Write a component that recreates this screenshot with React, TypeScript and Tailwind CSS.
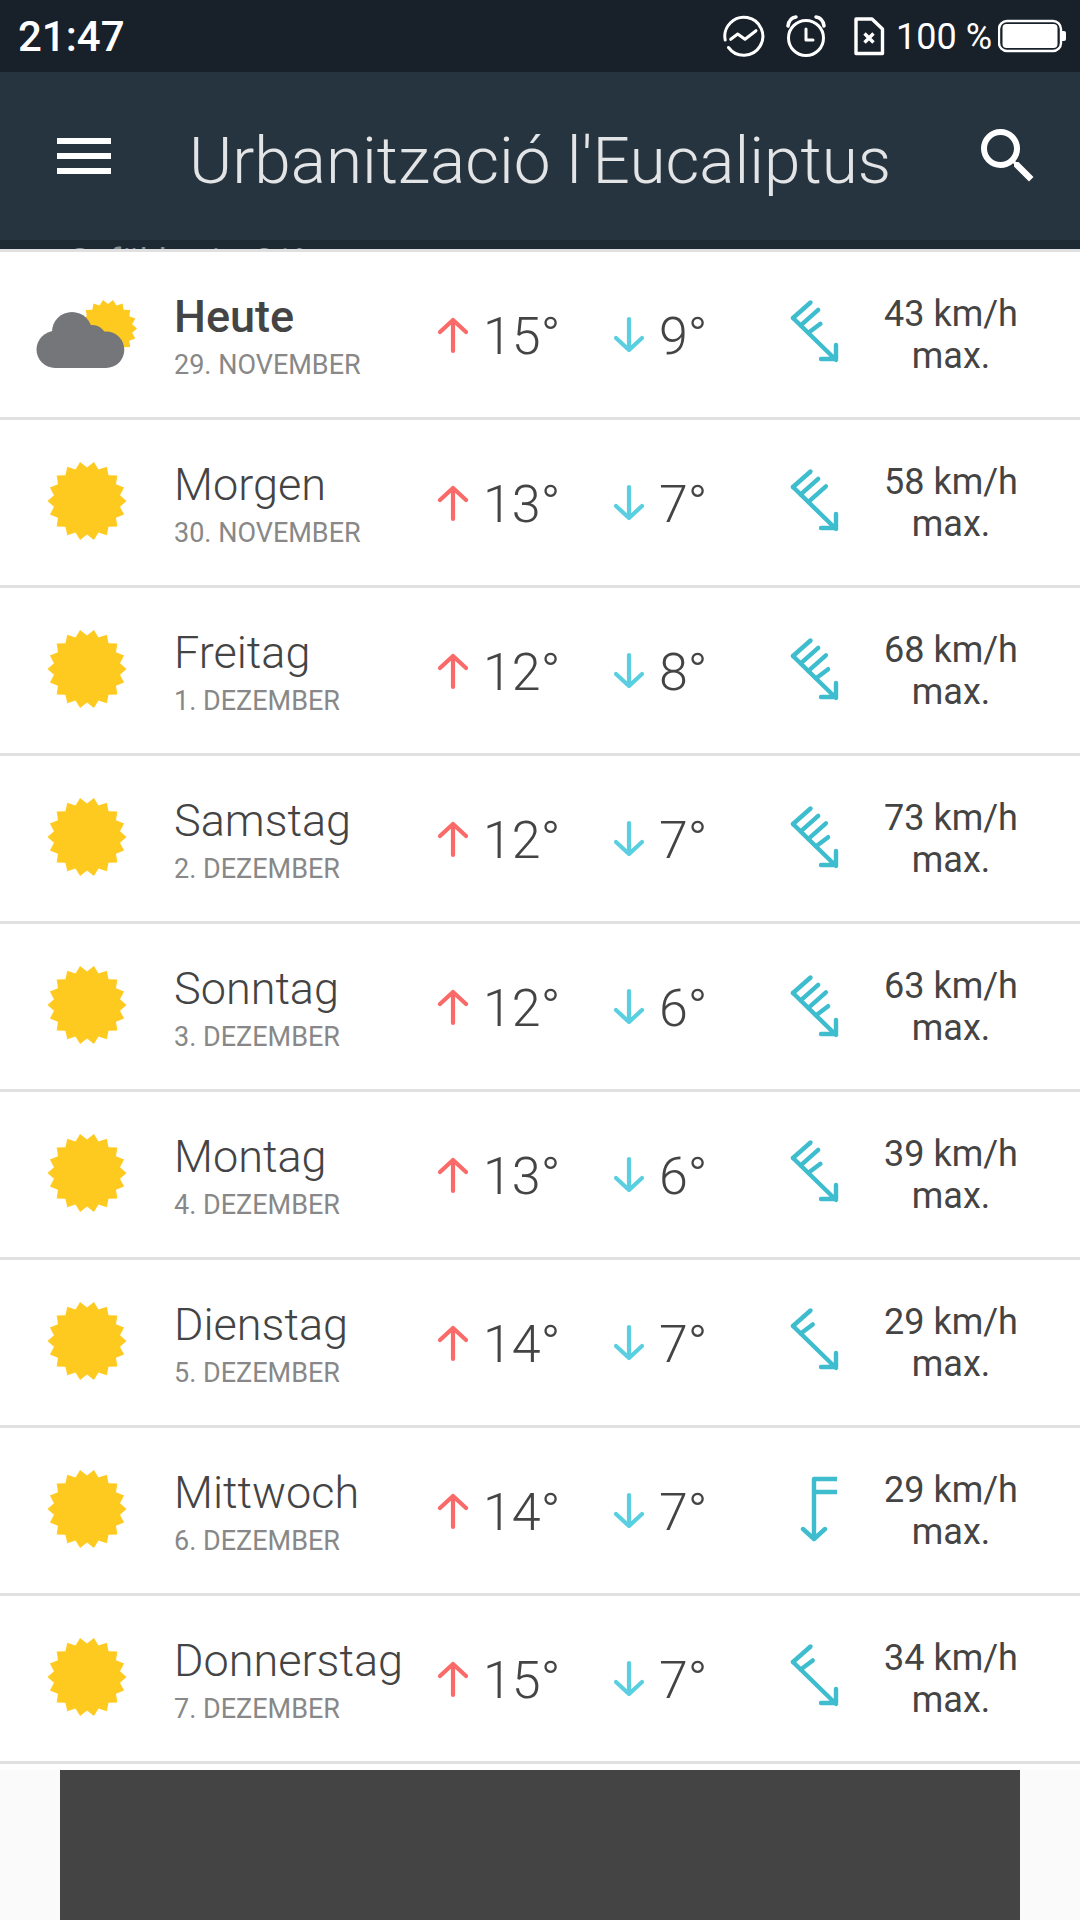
type Barb = "long" | "short";

type Day = {
  name: string;
  date: string;
  high: number;
  low: number;
  wind: number;
  barbs: Barb[];
  windY: number;
  today?: boolean;
  south?: boolean;
};

const days: Day[] = [
  { name: "Heute", date: "29. NOVEMBER", high: 15, low: 9, wind: 43, barbs: ["long", "long", "short"], windY: -17, today: true },
  { name: "Morgen", date: "30. NOVEMBER", high: 13, low: 7, wind: 58, barbs: ["long", "long", "long"], windY: -16 },
  { name: "Freitag", date: "1. DEZEMBER", high: 12, low: 8, wind: 68, barbs: ["long", "long", "long", "short"], windY: -15 },
  { name: "Samstag", date: "2. DEZEMBER", high: 12, low: 7, wind: 73, barbs: ["long", "long", "long", "short"], windY: -15 },
  { name: "Sonntag", date: "3. DEZEMBER", high: 12, low: 6, wind: 63, barbs: ["long", "long", "long", "short"], windY: -14 },
  { name: "Montag", date: "4. DEZEMBER", high: 13, low: 6, wind: 39, barbs: ["long", "long", "short"], windY: -17 },
  { name: "Dienstag", date: "5. DEZEMBER", high: 14, low: 7, wind: 29, barbs: ["long", "short"], windY: -17 },
  { name: "Mittwoch", date: "6. DEZEMBER", high: 14, low: 7, wind: 29, barbs: [], windY: 0, south: true },
  { name: "Donnerstag", date: "7. DEZEMBER", high: 15, low: 7, wind: 34, barbs: ["long", "short"], windY: -17 },
];

function sunPoints(cx: number, cy: number, outer: number, inner: number) {
  const pts: string[] = [];
  for (let i = 0; i < 36; i++) {
    const r = i % 2 === 0 ? outer : inner;
    const a = (i * 10 * Math.PI) / 180;
    pts.push(`${(cx + r * Math.cos(a)).toFixed(1)},${(cy + r * Math.sin(a)).toFixed(1)}`);
  }
  return pts.join(" ");
}

function SunIcon() {
  return (
    <svg width="100" height="100" viewBox="0 0 100 100" className="ml-[37px] -mt-[3px]">
      <polygon points={sunPoints(50, 50, 39.5, 33.5)} fill="#FFCA1F" />
    </svg>
  );
}

function CloudSunIcon() {
  return (
    <svg width="110" height="90" viewBox="0 0 110 90" className="ml-[30px]">
      <polygon points={sunPoints(78, 38.5, 29, 24.5)} fill="#FFCA1F" />
      <g fill="#757679">
        <circle cx="25" cy="59.5" r="18.5" />
        <circle cx="42" cy="42" r="20" />
        <circle cx="62" cy="50" r="15" />
        <circle cx="76" cy="59.7" r="18.3" />
        <rect x="25" y="50" width="51" height="28" />
      </g>
    </svg>
  );
}

function WindIcon({ barbs, y, south }: { barbs: Barb[]; y: number; south?: boolean }) {
  if (south) {
    return (
      <svg width="60" height="80" viewBox="0 0 60 80" fill="none" stroke="#3DBDCD" strokeWidth="4.4" strokeLinecap="round" strokeLinejoin="round">
        <path d="M29 8V68M18 58L29 68L40 58" />
        <path d="M29 8H52M29 21H52" strokeLinecap="butt" />
      </svg>
    );
  }
  return (
    <svg width="60" height="80" viewBox="0 0 60 80" fill="none" stroke="#3DBDCD" strokeWidth="4.4" strokeLinecap="round" strokeLinejoin="round">
      <g transform={`translate(8 ${40 + y})`}>
        <path d="M0 0L43 42M28 41H43V27" />
        {barbs.map((b, i) => {
          const x0 = i * 7.7;
          const y0 = i * 7.4;
          const dx = b === "long" ? 17.5 : 12;
          const dy = b === "long" ? -15.5 : -9;
          return <path key={i} d={`M${x0} ${y0}l${dx} ${dy}`} />;
        })}
      </g>
    </svg>
  );
}

function TempArrow({ up }: { up: boolean }) {
  return (
    <svg width="34" height="40" viewBox="0 0 34 40" fill="none" stroke={up ? "#F96A69" : "#5ACFDF"} strokeWidth="4.2" strokeLinecap="round" strokeLinejoin="round">
      {up ? <path d="M17 36V5M4 17L17 5L30 17" /> : <path d="M17 4V35M4 23L17 35L30 23" />}
    </svg>
  );
}

function DayRow({ day }: { day: Day }) {
  return (
    <div className="flex h-[168px] items-center border-b-[3px] border-[#e0e0e0] bg-white text-[#444444]">
      <div className="w-[174px] shrink-0">{day.today ? <CloudSunIcon /> : <SunIcon />}</div>
      <div className="flex w-[262px] shrink-0 flex-col pt-[4px]">
        <span className={`text-[45px] leading-[50px] ${day.today ? "font-medium" : "font-light"}`}>{day.name}</span>
        <span className="mt-[7px] text-[27px] leading-[32px] text-[#888888]">{day.date}</span>
      </div>
      <div className="flex w-[176px] shrink-0 items-center">
        <TempArrow up />
        <span className="ml-[13px] mt-[4px] text-[52px] font-light leading-none">{day.high}°</span>
      </div>
      <div className="flex w-[173px] shrink-0 items-center">
        <TempArrow up={false} />
        <span className="ml-[13px] mt-[4px] text-[52px] font-light leading-none">{day.low}°</span>
      </div>
      <div className="w-[83px] shrink-0">
        <WindIcon barbs={day.barbs} y={day.windY} south={day.south} />
      </div>
      <div className="w-[166px] shrink-0 text-center text-[36px] leading-[42px]">
        <div>{day.wind} km/h</div>
        <div>max.</div>
      </div>
    </div>
  );
}

function StatusBar() {
  return (
    <div className="flex h-[72px] items-center bg-[#18202A] pl-[18px] text-white">
      <span className="mt-[2px] w-[702px] text-[42px] font-medium leading-none">21:47</span>
      <svg width="48" height="48" viewBox="0 0 48 48" fill="none" stroke="white" strokeWidth="3" strokeLinecap="round" strokeLinejoin="round">
        <path d="M5.2 28A19 19 0 1 1 8.5 35.5" />
        <path d="M10.7 27.3L17.7 22L25 27.3L36 18.7" />
      </svg>
      <svg width="48" height="48" viewBox="0 0 48 48" fill="none" stroke="white" strokeWidth="3" strokeLinecap="round" strokeLinejoin="round" className="ml-[14px]">
        <circle cx="24" cy="26" r="17.5" />
        <path d="M24 17V28H31" />
        <path d="M6 14Q7 6 14 5M42 14Q41 6 34 5" strokeWidth="3.5" />
      </svg>
      <svg width="40" height="48" viewBox="0 0 40 48" fill="none" stroke="white" strokeWidth="3.4" strokeLinejoin="round" className="ml-[20px]">
        <path d="M6 7H22L32.5 17V41.5H6Z" />
        <path d="M14.5 21.5L23.5 30.5M23.5 21.5L14.5 30.5" />
      </svg>
      <span className="ml-[6px] mt-[2px] w-[102px] text-[36px] leading-none">100 %</span>
      <svg width="70" height="36" viewBox="0 0 70 36" fill="none">
        <rect x="1" y="3" width="62" height="30" rx="8" stroke="white" strokeWidth="2.4" />
        <rect x="4.5" y="6" width="55" height="24" rx="4" fill="white" />
        <path d="M64 13H66Q68 13 68 15V21Q68 23 66 23H64Z" fill="white" />
      </svg>
    </div>
  );
}

function Header() {
  return (
    <div className="flex h-[168px] items-center bg-[#263440] text-white">
      <svg width="54" height="36" viewBox="0 0 54 36" fill="white" className="ml-[57px]">
        <rect y="0" width="54" height="6" />
        <rect y="15" width="54" height="6" />
        <rect y="30" width="54" height="6" />
      </svg>
      <h1 className="ml-[78px] mt-[10px] w-[783px] text-[65.7px] font-light leading-none text-[#e3e4e5]">Urbanització l'Eucaliptus</h1>
      <svg width="72" height="72" viewBox="0 0 24 24" fill="white">
        <path d="M15.5 14h-.79l-.28-.27A6.471 6.471 0 0 0 16 9.5 6.5 6.5 0 1 0 9.5 16c1.61 0 3.09-.59 4.23-1.57l.27.28v.79l5 4.99L20.49 19l-4.99-5zm-6 0C7.01 14 5 11.99 5 9.5S7.01 5 9.5 5 14 7.01 14 9.5 11.99 14 9.5 14z" />
      </svg>
    </div>
  );
}

export default function App() {
  return (
    <div className="h-[1920px] w-[1080px] overflow-hidden bg-[#fafafa] font-[Roboto,sans-serif]">
      <StatusBar />
      <Header />
      <div className="h-[9px] overflow-hidden bg-[#1E2A33] pl-[68px] text-[34px] leading-[40px] text-[#8a9299]">
        Gefühlt wie: 21°
      </div>
      <div className="h-[3px] bg-[#e0e0e0]" />
      {days.map((day) => (
        <DayRow key={day.name} day={day} />
      ))}
      <div className="h-[6px] bg-[#fefefe]" />
      <div className="mx-[60px] h-[150px] bg-[#444444]" />
    </div>
  );
}
